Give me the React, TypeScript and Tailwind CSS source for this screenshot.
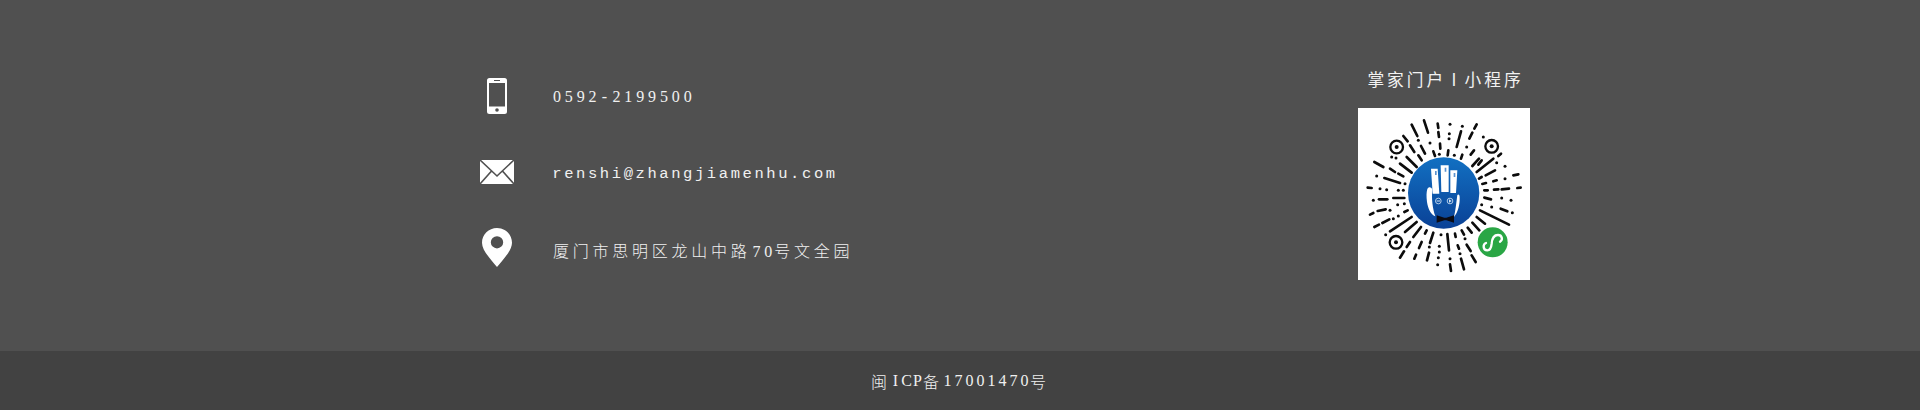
const cjk = "font-['Noto_Sans_CJK_SC',sans-serif] font-light tracking-[3.75px]";
const cjkFooter = "font-['Noto_Sans_CJK_SC',sans-serif] font-light tracking-[3px]";

function Cells({ text, small, mono }: { text: string; small?: boolean; mono?: boolean }) {
  return (
    <span className={mono ? "font-['Liberation_Mono',monospace] text-[15.500px]" : "font-['Liberation_Serif',serif]"}>
      {text.split("").map((c, i) => (
        <span key={i} className={small ? "inline-block w-[11px] text-center" : "inline-block w-[11.900px] text-center"}>
          {c}
        </span>
      ))}
    </span>
  );
}

const strokes: number[][] = [
  [215,193,232,227],[252,180,264,217],[293,190,295,203],[295,215,297,230],[363,213,350,260],[410,192,403,205],[397,217,388,235],
  [190,227,203,243],[210,255,223,275],[243,257,255,280],[300,250,301,265],[402,270,392,283],[367,283,363,295],[325,270,323,285],
  [280,273,285,287],[235,285,245,300],[200,290,230,320],[180,310,215,337],[150,325,165,335],[175,340,190,348],[103,305,130,320],
  [133,353,180,368],[83,382,95,383],[483,280,475,287],[460,295,410,335],[425,300,415,313],[417,295,397,317],[465,330,437,345],
  [425,350,417,355],[438,368,427,371],[460,363,470,360],[520,345,535,342],[433,390,443,390],[462,388,475,387],[485,387,507,385],
  [532,383,542,382],[160,413,193,413],[117,417,142,417],[90,463,100,458],[113,452,137,447],[193,455,203,450],[103,500,117,493],
  [127,488,148,477],[150,513,215,470],[195,515,230,485],[220,530,243,500],[260,510,255,520],[280,517,270,548],[322,521,327,570],
  [345,520,347,530],[365,510,372,523],[383,502,395,517],[397,487,418,510],[410,470,435,490],[420,450,507,493],[433,412,453,417],
  [482,445,502,453],[210,545,200,560],[245,545,237,563],[192,573,180,592],[228,583,223,595],[267,577,261,600],[330,612,333,632],
  [353,555,357,565],[363,595,372,627],[380,553,392,572],[395,585,407,605],
];
const dots: number[][] = [
  [330,192],[328,220],[327,235],[367,198],[235,240],[270,248],[380,260],[430,230],[298,282],[343,285],[155,290],[168,293],[110,347],
  [195,370],[120,385],[140,388],[175,390],[190,390],[470,307],[495,318],[495,355],[100,420],[173,433],[193,430],[150,450],[160,475],
  [175,467],[137,523],[303,523],[455,440],[425,433],[517,457],[485,413],[513,420],[268,560],[298,558],[298,575],[295,592],[293,613],
  [330,595],[360,580],[375,535],
];

function QrCode() {
  return (
    <svg viewBox="54 143 516 516" className="block w-[172px] h-[172px] bg-white">
      <defs>
        <linearGradient id="blue" x1="0" y1="0" x2="0" y2="1">
          <stop offset="0" stopColor="#1270c2" />
          <stop offset="1" stopColor="#0a4196" />
        </linearGradient>
      </defs>
      <g stroke="#0c0c0c" strokeWidth="8" strokeLinecap="round" fill="none">
        {strokes.map(([a, b, c, d], i) => (
          <line key={i} x1={a} y1={b} x2={c} y2={d} />
        ))}
      </g>
      {dots.map(([x, y], i) => (
        <circle key={i} cx={x} cy={y} r="4.500" fill="#0c0c0c" />
      ))}
      {[[170,260],[455,258],[168,546]].map(([x, y], i) => (
        <g key={i}>
          <circle cx={x} cy={y} r="19" fill="none" stroke="#0c0c0c" strokeWidth="7" />
          <circle cx={x} cy={y} r="6" fill="#0c0c0c" />
        </g>
      ))}
      <circle cx="311" cy="398" r="107" fill="url(#blue)" />
      <path d="M273 325 H293 L298 400 H278 Z M302 315 H326 V395 H304 Z M331 330 H352 L348 398 H331 Z" fill="#fff" />
      <path d="M285 332 h5 v12 h-5 Z M314 322 h5 v12 h-5 Z M341 338 h5 v12 h-5 Z" fill="#5b93cf" />
      <path d="M262 386 C266 378 274 380 277 388 C274 415 278 445 286 468 C272 462 264 445 261 425 C259 408 259 396 262 386 Z" fill="#fff" />
      <path d="M352 404 C356 400 359 404 359 410 C360 432 354 456 342 470 C347 448 349 426 352 404 Z" fill="#fff" />
      <circle cx="295" cy="422" r="8.500" fill="none" stroke="#d5e4f4" strokeWidth="2.500" />
      <circle cx="330" cy="422" r="8.500" fill="none" stroke="#d5e4f4" strokeWidth="2.500" />
      <rect x="290" y="420.500" width="10" height="3" fill="#d5e4f4" />
      <path d="M327 417 L335 422 L327 427 Z" fill="#d5e4f4" />
      <path d="M290 465 L313 472 H319 L342 465 V487 L319 480 H313 L290 487 Z" fill="#0b0b14" />
      <circle cx="458" cy="546" r="45" fill="#2aa645" />
      <path d="M438 548 C428 552 428 570 442 570 C452 570 454 560 455 550 C456 535 462 524 474 524 C486 524 490 538 480 544" fill="none" stroke="#fff" strokeWidth="7" strokeLinecap="round" />
    </svg>
  );
}

function PhoneIcon() {
  return (
    <svg width="20" height="36" viewBox="0 0 20 36">
      <path fillRule="evenodd" fill="#fff" d="M2.500 0h15A2.500 2.500 0 0 1 20 2.500v31a2.500 2.500 0 0 1-2.500 2.500h-15A2.500 2.500 0 0 1 0 33.500v-31A2.500 2.500 0 0 1 2.500 0ZM2 5v23.500h16V5Z" />
      <rect x="7" y="2" width="6" height="1" fill="#505050" />
      <circle cx="10" cy="32" r="1.800" fill="#505050" />
    </svg>
  );
}

function MailIcon() {
  return (
    <svg width="34" height="24" viewBox="0 0 34 24" className="-mt-[2px]">
      <rect width="34" height="24" fill="#fff" />
      <path d="M0 0 L17 16 L34 0 M0 24 L12 10.500 M34 24 L22 10.500" fill="none" stroke="#505050" strokeWidth="1.600" />
    </svg>
  );
}

function PinIcon() {
  return (
    <svg width="30" height="39" viewBox="0 0 30 40" preserveAspectRatio="none" className="-mt-[6px]">
      <path fillRule="evenodd" fill="#fff" d="M15 0C6.700 0 0 6.600 0 15c0 8.500 10 18.500 15 25 5-6.500 15-16.500 15-25C30 6.600 23.300 0 15 0Zm0 8.500a6.200 6.200 0 1 1 0 12.400 6.200 6.200 0 0 1 0-12.400Z" />
    </svg>
  );
}

function Row({ icon, children, className }: { icon: React.ReactNode; children: React.ReactNode; className: string }) {
  return (
    <div className="flex h-[77.500px] items-center">
      <div className="flex w-[34px] justify-center">{icon}</div>
      <div className={`${className} text-[16px] text-[#f0f0f0] whitespace-nowrap`}>{children}</div>
    </div>
  );
}

export default function App() {
  return (
    <div className="w-full h-[410px] flex flex-col bg-[#505050]">
      <div className="flex h-[351px] justify-between pl-[480px] pr-[390px]">
        <div className="pt-[57px]">
          <Row className="ml-[37px] pt-[1px]" icon={<PhoneIcon />}>
            <Cells text="0592-2199500" />
          </Row>
          <Row className="ml-[37px] -mt-[1px]" icon={<MailIcon />}>
            <Cells mono text="renshi@zhangjiamenhu.com" />
          </Row>
          <Row className="ml-[39px]" icon={<PinIcon />}>
            <span className={cjk}>厦门市思明区龙山中路</span>
            <Cells text="70" />
            <span className={cjk}>号文全园</span>
          </Row>
        </div>
        <div className="pt-[66px] flex flex-col items-center">
          <div className="h-[26px] leading-[26px] ml-[3px] text-[16.700px] text-[#f2f2f2] font-['Noto_Sans_CJK_SC',sans-serif] tracking-[3px] [word-spacing:-1.500px] whitespace-nowrap">
            掌家门户 I 小程序
          </div>
          <div className="mt-[16px]">
            <QrCode />
          </div>
        </div>
      </div>
      <div className="flex h-[59px] items-center justify-center bg-[#424242] text-[16px] text-[#f0f0f0] whitespace-nowrap">
        <span className={cjkFooter}>闽</span>
        <Cells small text="ICP" />
        <span className={cjkFooter}>备</span>
        <Cells small text="17001470" />
        <span className={cjkFooter}>号</span>
      </div>
    </div>
  );
}
